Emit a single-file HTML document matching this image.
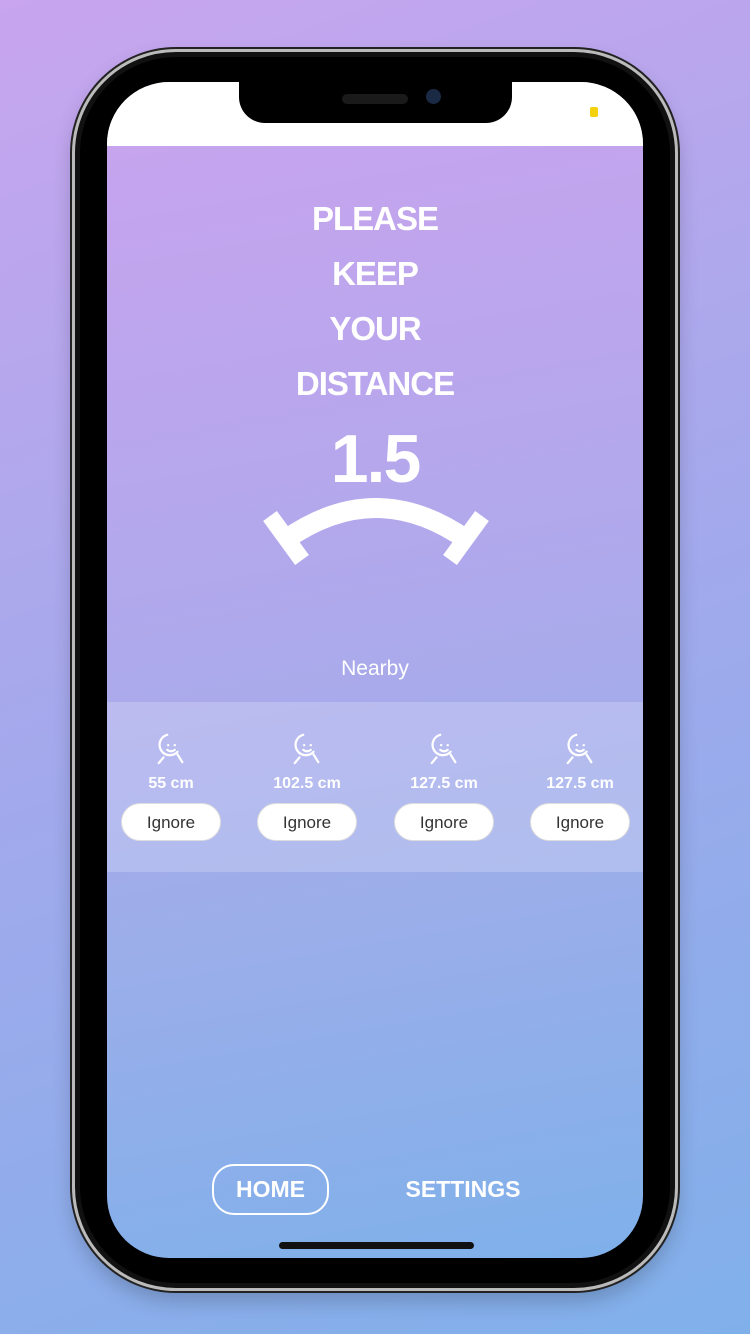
<!DOCTYPE html>
<html><head><meta charset="utf-8"><style>
*{margin:0;padding:0;box-sizing:border-box}
body{width:750px;height:1334px;overflow:hidden;background:linear-gradient(160deg,#c8a5ee 0%,#a2a9ec 50%,#80b0ea 100%);font-family:"Liberation Sans",sans-serif;position:relative}
.body{position:absolute;left:72px;top:49px;width:606px;height:1242px;border-radius:104px;background:#111;border:3px solid #bbb;box-shadow:0 0 0 2px #222,0 10px 20px rgba(0,0,0,.2)}
.bez{position:absolute;left:80px;top:57px;width:590px;height:1226px;border-radius:96px;background:#000}
.screen{position:absolute;left:107px;top:82px;width:536px;height:1176px;border-radius:62px;overflow:hidden;background:linear-gradient(170deg,#c9a3ee 0%,#b2a8ec 40%,#9aaeea 70%,#7fb0ea 100%)}
.status{position:absolute;left:0;top:0;width:536px;height:64px;background:#fff}
.notch{position:absolute;left:132px;top:0;width:273px;height:41px;background:#000;border-radius:0 0 26px 26px}
.t{position:absolute;left:0;width:536px;text-align:center;color:#fff;font-weight:bold}
.panel{position:absolute;left:0;top:620px;width:536px;height:170px;background:rgba(255,255,255,.2)}
.col{position:absolute;top:648px;width:100px;text-align:center;color:#fff}
.col .d{font-weight:bold;font-size:16px;margin-top:4px}
.btn{margin-top:10px;width:100px;height:38px;border-radius:19px;background:#fff;color:#333;font-size:17px;line-height:38px;border:1px solid #ddd}
</style></head><body>
<div class="body"></div><div class="bez"></div>
<div class="screen">
<div class="status"></div>
<div class="notch"><div style="position:absolute;left:103px;top:12px;width:66px;height:10px;border-radius:5px;background:#1a1a1a"></div><div style="position:absolute;left:187px;top:7px;width:15px;height:15px;border-radius:50%;background:#1b2a44"></div></div>
<div style="position:absolute;left:483px;top:25px;width:8px;height:10px;border-radius:2px;background:#f4d20b"></div>
<div class="t" style="top:109px;font-size:33px;line-height:55px;letter-spacing:-1px">PLEASE<br>KEEP<br>YOUR<br>DISTANCE</div>
<div class="t" style="top:338px;font-size:68px;letter-spacing:-2px">1.5</div>
<svg style="position:absolute;left:0;top:0" width="536" height="600">
<path d="M178 458 Q269 394 360 458" stroke="#fff" stroke-width="20" fill="none"/>
<path d="M163 434 L195 478 M375 434 L343 478" stroke="#fff" stroke-width="17"/>
</svg>
<div class="t" style="top:575px;font-size:21px;font-weight:normal">Nearby</div>
<div class="panel"></div>
<div class="col" style="left:14px"><svg width="32" height="36" viewBox="0 0 34 36" fill="none" stroke="#fff" stroke-width="2.4" stroke-linecap="round"><path d="M13 4 A11 11 0 1 0 24 22"/><circle cx="14" cy="15" r="1.3" fill="#fff" stroke="none"/><circle cx="21" cy="15" r="1.3" fill="#fff" stroke="none"/><path d="M13 20 Q17 23 21 20"/><path d="M4 34 L9 28 M24 25 L29 33"/></svg><div class="d">55 cm</div><div class="btn">Ignore</div></div>
<div class="col" style="left:150px"><svg width="32" height="36" viewBox="0 0 34 36" fill="none" stroke="#fff" stroke-width="2.4" stroke-linecap="round"><path d="M13 4 A11 11 0 1 0 24 22"/><circle cx="14" cy="15" r="1.3" fill="#fff" stroke="none"/><circle cx="21" cy="15" r="1.3" fill="#fff" stroke="none"/><path d="M13 20 Q17 23 21 20"/><path d="M4 34 L9 28 M24 25 L29 33"/></svg><div class="d">102.5 cm</div><div class="btn">Ignore</div></div>
<div class="col" style="left:287px"><svg width="32" height="36" viewBox="0 0 34 36" fill="none" stroke="#fff" stroke-width="2.4" stroke-linecap="round"><path d="M13 4 A11 11 0 1 0 24 22"/><circle cx="14" cy="15" r="1.3" fill="#fff" stroke="none"/><circle cx="21" cy="15" r="1.3" fill="#fff" stroke="none"/><path d="M13 20 Q17 23 21 20"/><path d="M4 34 L9 28 M24 25 L29 33"/></svg><div class="d">127.5 cm</div><div class="btn">Ignore</div></div>
<div class="col" style="left:423px"><svg width="32" height="36" viewBox="0 0 34 36" fill="none" stroke="#fff" stroke-width="2.4" stroke-linecap="round"><path d="M13 4 A11 11 0 1 0 24 22"/><circle cx="14" cy="15" r="1.3" fill="#fff" stroke="none"/><circle cx="21" cy="15" r="1.3" fill="#fff" stroke="none"/><path d="M13 20 Q17 23 21 20"/><path d="M4 34 L9 28 M24 25 L29 33"/></svg><div class="d">127.5 cm</div><div class="btn">Ignore</div></div>
<div style="position:absolute;left:105px;top:1082px;width:117px;height:51px;border:2px solid #fff;border-radius:22px;color:#fff;font-weight:bold;font-size:23px;text-align:center;line-height:47px">HOME</div>
<div style="position:absolute;left:290px;top:1082px;width:132px;color:#fff;font-weight:bold;font-size:23px;text-align:center;line-height:51px">SETTINGS</div>
<div style="position:absolute;left:172px;top:1160px;width:195px;height:7px;border-radius:4px;background:#111"></div>
</div>
</body></html>
